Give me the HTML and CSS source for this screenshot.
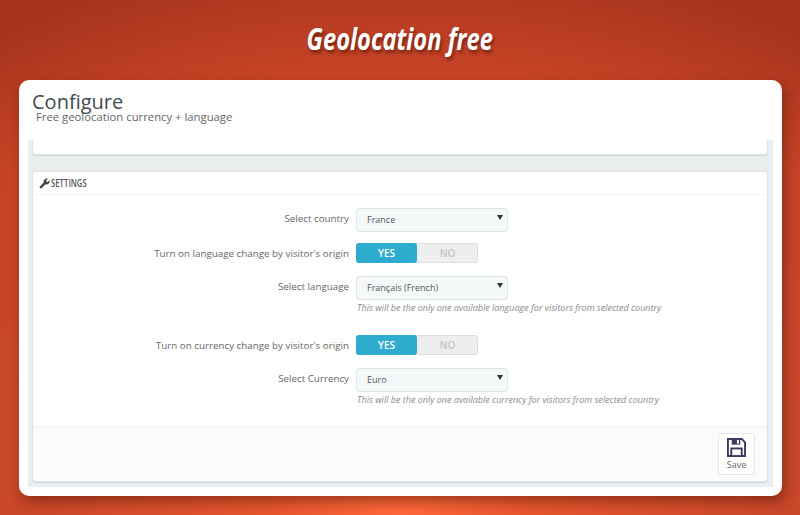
FILE: index.html
```html
<!DOCTYPE html>
<html>
<head>
  <meta charset="UTF-8">
  <title>Geolocation free</title>
  <link rel="stylesheet" href="styles.css">
</head>
<body>
  <div class="header">
    <h1 class="page-title">Geolocation free</h1>
  </div>

  <div class="card">
    <div class="card-head">
      <div class="card-title">Configure</div>
      <div class="card-subtitle">Free geolocation currency + language</div>
    </div>

    <div class="content">
      <div class="panel-stub"></div>

      <div class="panel">
        <div class="panel-heading">
          <svg class="wrench" viewBox="0 0 24 24"><path transform="translate(24 0) scale(-1 1)" d="M22.7 19l-9.1-9.1c.9-2.3.4-5-1.5-6.9-2-2-5-2.4-7.4-1.3L9 6 6 9 1.6 4.7C.4 7.1.9 10.1 2.9 12.1c1.9 1.9 4.6 2.4 6.9 1.5l9.1 9.1c.4.4 1 .4 1.4 0l2.3-2.3c.5-.4.5-1.1.1-1.4z"/></svg>
          <span class="panel-name">SETTINGS</span>
        </div>

        <div class="form">
          <div class="row">
            <label class="row-label">Select country</label>
            <div class="select-wrap">
              <select class="select"><option>France</option></select>
            </div>
          </div>

          <div class="row row-toggle">
            <label class="row-label">Turn on language change by visitor's origin</label>
            <div class="toggle">
              <span class="toggle-yes">YES</span>
              <span class="toggle-no">NO</span>
            </div>
          </div>

          <div class="row row-select">
            <label class="row-label">Select language</label>
            <div class="select-wrap">
              <select class="select"><option>Français (French)</option></select>
            </div>
          </div>
          <div class="help">This will be the only one available language for visitors from selected country</div>

          <div class="row row-toggle row-gap">
            <label class="row-label">Turn on currency change by visitor's origin</label>
            <div class="toggle">
              <span class="toggle-yes">YES</span>
              <span class="toggle-no">NO</span>
            </div>
          </div>

          <div class="row row-select">
            <label class="row-label">Select Currency</label>
            <div class="select-wrap">
              <select class="select"><option>Euro</option></select>
            </div>
          </div>
          <div class="help">This will be the only one available currency for visitors from selected country</div>
        </div>

        <div class="panel-footer">
          <button class="save-button">
            <svg class="save-icon" viewBox="0 0 20 20"><path d="M1 1h14.5L19 4.5V19H1z" fill="#fff" stroke="#3d3a5c" stroke-width="2"/><rect x="5" y="1" width="9" height="6" fill="#3d3a5c"/><rect x="10.5" y="2" width="2" height="4" fill="#fff"/><rect x="4.5" y="11" width="11" height="8" fill="#fff" stroke="#3d3a5c" stroke-width="2"/></svg>
            <span>Save</span>
          </button>
        </div>
      </div>
    </div>
  </div>
</body>
</html>
```

FILE: styles.css
```css
html, body {
  height: 515px;
  overflow: hidden;
}

body {
  margin: 0;
  font-family: "Open Sans", Arial, sans-serif;
  color: #555;
  background: radial-gradient(ellipse 760px 560px at 50% 100%, #ff673a 0%, #e5552e 18%, #c9472a 50%, #c64326 80%, #a8341d 100%);
}

.header {
  height: 80px;
  display: flex;
  justify-content: center;
}

.page-title {
  margin: 13px 0 0;
  height: 50px;
  font-size: 31px;
  line-height: 50px;
  font-weight: 700;
  font-style: italic;
  color: white;
  white-space: nowrap;
  transform: scaleX(0.765);
  text-shadow: 2px 3px 4px rgba(60, 15, 0, 0.55);
}

.card {
  width: 763px;
  height: 416px;
  margin-left: 19px;
  padding: 0 9px 9px;
  box-sizing: border-box;
  display: flex;
  flex-direction: column;
  background: white;
  border-radius: 10px;
  box-shadow: 3px 6px 12px rgba(70, 20, 5, 0.45);
}

.card-head {
  height: 60px;
  flex: none;
  padding: 12px 0 0 4px;
  box-sizing: border-box;
}

.card-title {
  font-size: 20px;
  line-height: 19px;
  color: #3f4a52;
}

.card-subtitle {
  margin-left: 4px;
  font-size: 11.3px;
  line-height: 12px;
  color: #666;
}

.content {
  flex: 1;
  padding: 0 5px 5px 4px;
  display: flex;
  flex-direction: column;
  background: #eaedee;
}

.panel-stub {
  height: 15px;
  flex: none;
  background: white;
  border: 1px solid #dfe3e5;
  border-top: none;
  border-radius: 0 0 4px 4px;
  box-sizing: border-box;
  box-shadow: 0 1px 0 #d3d8db;
}

.panel {
  flex: 1;
  margin-top: 16px;
  display: flex;
  flex-direction: column;
  background: white;
  border: 1px solid #dfe3e5;
  border-radius: 4px;
  box-shadow: 0 1px 0 #d3d8db;
}

.panel-heading {
  height: 22px;
  flex: none;
  margin: 0 3px;
  padding-left: 3px;
  display: flex;
  align-items: center;
  gap: 1px;
  border-bottom: 1px solid #eef0f1;
  font-size: 10.5px;
  font-weight: 600;
  color: #555;
}

.panel-name {
  transform: scaleX(0.74);
  transform-origin: left center;
}

.wrench {
  width: 11px;
  height: 11px;
  fill: #444;
}

.form {
  flex: 1;
  padding-top: 11px;
}

.row {
  display: flex;
  align-items: center;
  gap: 7px;
}

.row-label {
  width: 316px;
  text-align: right;
  font-size: 9.8px;
  color: #666;
}

.row-toggle {
  margin-top: 13px;
}

.row-select {
  margin-top: 11px;
}

.row-gap {
  margin-top: 21px;
}

.select-wrap {
  position: relative;
  width: 152px;
  height: 24px;
}

.select-wrap::after {
  content: "";
  position: absolute;
  top: 9px;
  right: 5px;
  border-left: 3px solid transparent;
  border-right: 3px solid transparent;
  border-top: 5px solid #333;
}

.select {
  width: 100%;
  height: 100%;
  padding: 0 0 0 10px;
  appearance: none;
  background: #f5f8f9;
  border: 1px solid #dbe6e9;
  border-radius: 3px;
  font-family: "Open Sans", Arial, sans-serif;
  font-size: 9px;
  color: #555;
}

.toggle {
  width: 122px;
  height: 20px;
  display: flex;
  background: #eeeeee;
  border-radius: 3px;
  box-shadow: inset 0 0 0 1px #dedede;
  font-size: 10px;
  font-weight: 600;
  line-height: 20px;
  text-align: center;
}

.toggle-yes {
  width: 61px;
  background: #2eacce;
  border-radius: 3px;
  color: white;
}

.toggle-no {
  flex: 1;
  color: #c4c4c4;
}

.help {
  margin: 4px 0 0 324px;
  font-size: 9px;
  line-height: 12px;
  font-style: italic;
  color: #8a8a8a;
}

.panel-footer {
  height: 54px;
  flex: none;
  padding-right: 12px;
  display: flex;
  justify-content: flex-end;
  align-items: center;
  background: #fafbfc;
  border-top: 1px solid #eef0f1;
  border-radius: 0 0 4px 4px;
}

.save-button {
  width: 37px;
  height: 42px;
  padding: 0;
  display: flex;
  flex-direction: column;
  align-items: center;
  gap: 1px;
  justify-content: center;
  background: white;
  border: 1px solid #e6e6e6;
  border-radius: 3px;
  font-family: "Open Sans", Arial, sans-serif;
  font-size: 9px;
  color: #666;
}

.save-icon {
  width: 19px;
  height: 19px;
}
```
